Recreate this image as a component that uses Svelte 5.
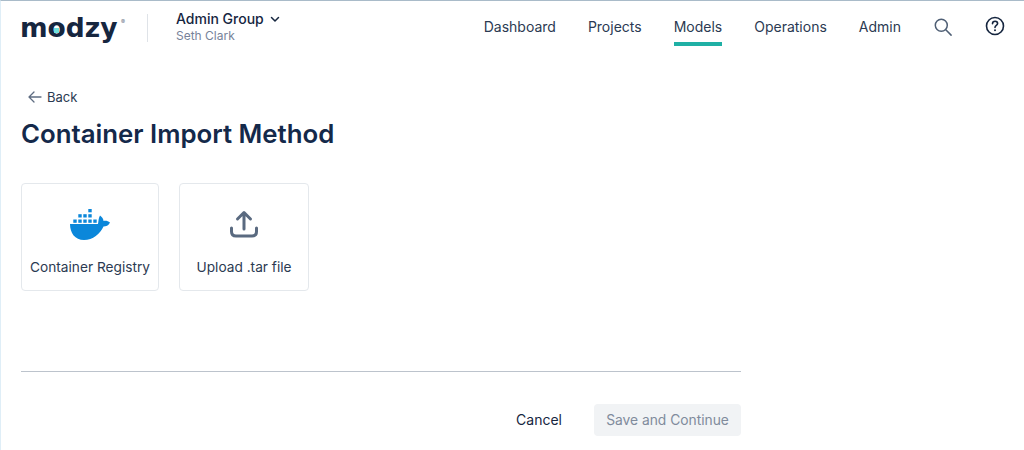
<script lang="ts">
	const navItems = ['Dashboard', 'Projects', 'Models', 'Operations', 'Admin'];
	let active = 'Models';
</script>

<div class="page">
	<header class="topbar">
		<div class="logo">
			<span class="logo-text">modzy</span><span class="logo-dot"></span><span class="reg">®</span>
		</div>
		<div class="sep"></div>
		<div class="group">
			<div class="group-name">
				Admin Group
				<svg width="10" height="7" viewBox="0 0 10 7" fill="none">
					<path d="M1.5 1.5 5 5l3.500-3.500" stroke="#16263f" stroke-width="1.500" stroke-linecap="round" stroke-linejoin="round" />
				</svg>
			</div>
			<div class="group-user">Seth Clark</div>
		</div>

		<nav class="nav">
			{#each navItems as item}
				<a href="#top" class="nav-item" class:active={item === active}>{item}</a>
			{/each}
		</nav>

		<div class="tools">
			<svg width="18" height="18" viewBox="0 0 18 18" fill="none">
				<circle cx="7.300" cy="7.300" r="6" stroke="#4f5f75" stroke-width="1.500" />
				<path d="m11.800 11.800 5.300 5.300" stroke="#4f5f75" stroke-width="1.500" stroke-linecap="round" />
			</svg>
			<svg class="help" width="20" height="20" viewBox="0 0 20 20" fill="none">
				<circle cx="10" cy="10" r="8.500" stroke="#16263f" stroke-width="1.600" />
				<path d="M7.500 7.700c0-1.500 1.100-2.500 2.600-2.500s2.500 1 2.500 2.300c0 1.900-2.600 1.900-2.600 3.900" stroke="#16263f" stroke-width="1.600" stroke-linecap="round" />
				<circle cx="10" cy="14.300" r="1" fill="#16263f" />
			</svg>
		</div>
	</header>

	<main class="content">
		<a href="#top" class="back">
			<svg width="14" height="12" viewBox="0 0 14 12" fill="none">
				<path d="M13 6H1.500M6 1 1 6l5 5" stroke="#5f6d82" stroke-width="1.300" stroke-linecap="round" stroke-linejoin="round" />
			</svg>
			Back
		</a>
		<h1>Container Import Method</h1>

		<div class="cards">
			<button class="card registry">
				<svg width="40" height="31" viewBox="0 0 40 31">
					<g fill="#0b87da">
						<rect x="3.300" y="10.500" width="3.400" height="3.300" />
						<rect x="8.300" y="10.500" width="3.400" height="3.300" />
						<rect x="13.300" y="10.500" width="3.400" height="3.300" />
						<rect x="18.300" y="10.500" width="3.400" height="3.300" />
						<rect x="23.300" y="10.500" width="3.400" height="3.300" />
						<rect x="8.300" y="5.200" width="3.400" height="3.300" />
						<rect x="13.300" y="5.200" width="3.400" height="3.300" />
						<rect x="18.300" y="5.200" width="3.400" height="3.300" />
						<rect x="18.300" y="0" width="3.400" height="3.300" />
						<path d="M0 15h28c.5-3 .5-6 2-8.500 2 1.500 3.500 3.500 3.500 5.500 2-.5 4.500-.2 6.500 1.500-1.500 3-4 4-6.500 4C30 25 23 31 14 31 5 31 0 24 0 15Z" />
					</g>
				</svg>
				<span>Container Registry</span>
			</button>
			<button class="card upload">
				<svg width="30" height="29" viewBox="0 0 30 29" fill="none">
					<path d="M15 19V3M8.500 9 15 2.500 21.500 9" stroke="#5a6a80" stroke-width="3" stroke-linecap="round" stroke-linejoin="round" />
					<path d="M2.500 18v3.500c0 3 1.500 4.500 4.500 4.500h16c3 0 4.500-1.500 4.500-4.500V18" stroke="#5a6a80" stroke-width="3" stroke-linecap="round" />
				</svg>
				<span>Upload .tar file</span>
			</button>
		</div>

		<hr />

		<div class="actions">
			<button class="cancel">Cancel</button>
			<button class="save" disabled>Save and Continue</button>
		</div>
	</main>
</div>

<style>
	:global(body) {
		background: #fff;
	}

	.page {
		height: 450px;
		box-sizing: border-box;
		overflow: hidden;
		border-top: 1px solid #a9bbc9;
		border-left: 1px solid #dfeef7;
		font-family: Inter, 'Liberation Sans', sans-serif;
		color: #16263f;
	}

	.topbar {
		display: flex;
		align-items: center;
		height: 51px;
		padding: 0 19px 0 20px;
	}

	.logo {
		position: relative;
		display: flex;
		width: 108px;
		height: 30px;
		margin-left: -1px;
		margin-top: 2px;
		align-items: center;
	}

	.logo-text {
		font-family: 'DejaVu Sans', sans-serif;
		font-weight: 700;
		font-size: 26.500px;
		color: #16263f;
	}

	.logo-dot {
		position: absolute;
		left: 34px;
		top: 15px;
		width: 5px;
		height: 5px;
		background: #6fe0dc;
	}

	.reg {
		position: absolute;
		left: 101px;
		top: 5px;
		font-size: 6px;
		color: #6b7688;
	}

	.sep {
		width: 1px;
		height: 28px;
		margin: 2px 28px 0 19px;
		background: #dfe3e8;
	}

	.group-name {
		display: flex;
		align-items: center;
		gap: 6px;
		font-size: 14px;
		font-weight: 500;
		line-height: 18px;
	}

	.group-user {
		font-size: 12px;
		line-height: 15px;
		color: #77839a;
	}

	.nav {
		display: flex;
		gap: 32px;
		margin-left: auto;
		align-self: stretch;
	}

	.nav-item {
		position: relative;
		display: flex;
		align-items: center;
		font-size: 14px;
		font-weight: 400;
		color: #2b3a52;
		text-decoration: none;
	}

	.nav-item.active::after {
		content: '';
		position: absolute;
		left: 0;
		right: 0;
		top: 41px;
		height: 4px;
		background: #1fb0a5;
	}

	.tools {
		display: flex;
		align-items: center;
		gap: 33px;
		margin-left: 33px;
	}

	.help {
		margin-bottom: 2px;
	}

	.content {
		width: 720px;
		margin-left: 20px;
		padding-top: 37px;
	}

	.back {
		display: flex;
		align-items: center;
		gap: 5px;
		height: 16px;
		padding-left: 7px;
		font-size: 13px;
		font-weight: 400;
		color: #2b3a52;
		text-decoration: none;
	}

	h1 {
		margin: 12px 0 0;
		font-size: 25.800px;
		line-height: 34px;
		font-weight: 600;
		color: #14294a;
	}

	.cards {
		display: flex;
		gap: 20px;
		margin-top: 32px;
	}

	.card {
		display: flex;
		flex-direction: column;
		align-items: center;
		box-sizing: border-box;
		height: 108px;
		background: #fff;
		border: 1px solid #e4e8ec;
		border-radius: 4px;
		padding: 0;
		font-family: inherit;
		font-size: 13.700px;
		color: #2b3a52;
	}

	.card span {
		margin-top: auto;
		margin-bottom: 14px;
		line-height: 18px;
	}

	.registry {
		width: 138px;
		padding-top: 25px;
	}

	.upload {
		width: 130px;
		padding-top: 26px;
	}

	hr {
		margin: 80px 0 0;
		border: 0;
		border-top: 1px solid #bcc3cc;
	}

	.actions {
		display: flex;
		justify-content: flex-end;
		align-items: center;
		gap: 32px;
		margin-top: 32px;
	}

	.actions button {
		font-family: inherit;
		border: 0;
		cursor: pointer;
	}

	.cancel {
		background: none;
		padding: 0 0 2px;
		font-size: 14px;
		font-weight: 400;
		color: #16263f;
	}

	.save {
		height: 32px;
		width: 147px;
		padding: 0;
		border-radius: 4px;
		background: #f1f3f5;
		color: #808b9c;
		font-size: 13.800px;
		font-weight: 400;
	}
</style>
